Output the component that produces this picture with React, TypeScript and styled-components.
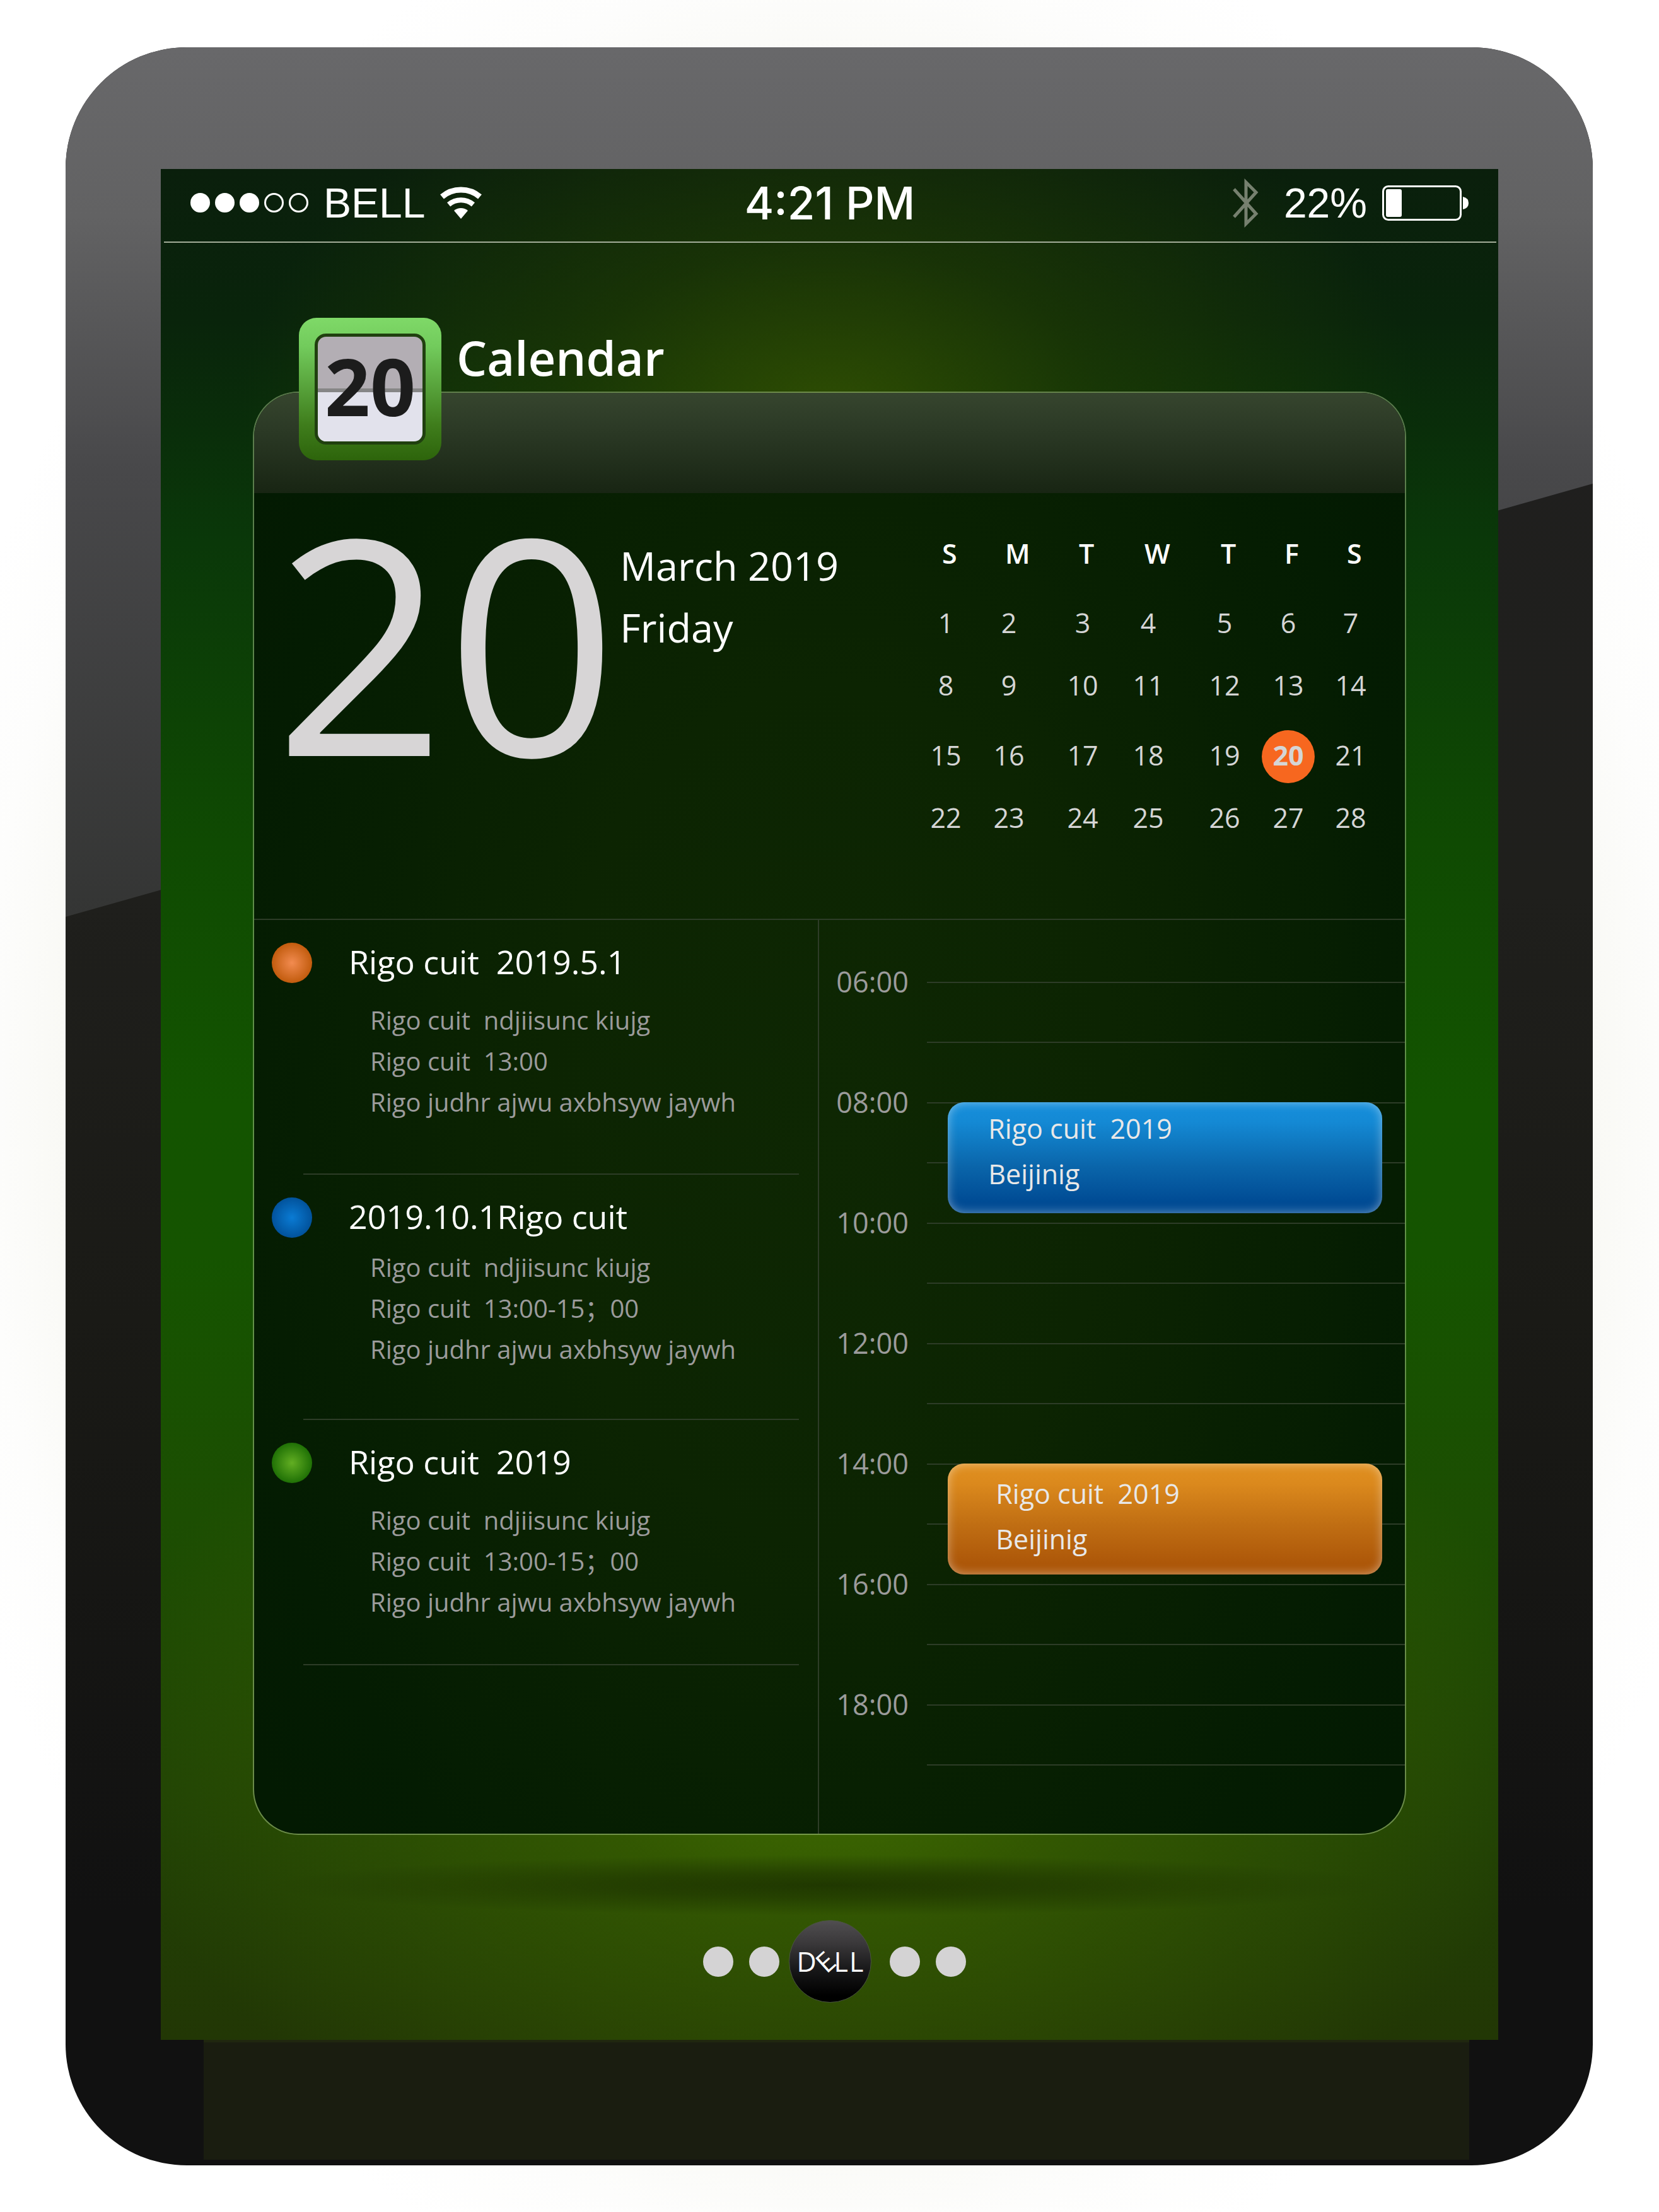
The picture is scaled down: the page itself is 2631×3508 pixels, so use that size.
import React from "react";
import styled, { createGlobalStyle } from "styled-components";

const GlobalStyle = createGlobalStyle`
  *, *::before, *::after { box-sizing: border-box; }
  body {
    margin: 0;
    font-family: "Open Sans", "Noto Sans", "Noto Sans CJK SC", sans-serif;
    color: #fff;
    background: #fff;
  }
  h1, h2, p, ol, ul { margin: 0; padding: 0; font-weight: 400; }
  ol, ul { list-style: none; }
`;

const Page = styled.div`
  padding: 75px 105px 74px 104px;
  background: radial-gradient(ellipse 56% 56% at 50% 50%, #f6f7ef 0%, #f8f8f3 80%, #fdfdfc 91%, #fff 100%);
`;

const Device = styled.div`
  position: relative;
  overflow: hidden;
  padding: 193px 150px 9px 151px;
  border-radius: 192px;
  background: linear-gradient(180deg, #201f20 0%, #1f1f1c 40%, #1a1a16 60%, #111 88%, #111 100%);

  &::before {
    content: "";
    position: absolute;
    inset: 0;
    background: linear-gradient(180deg, #68686a 0%, #626263 8%, #48484a 20%, #343534 41%);
    clip-path: polygon(0 0, 100% 0, 100% 692px, 0 1379px);
  }
`;

const Screen = styled.main`
  position: relative;
  padding-bottom: 59px;
  background:
    radial-gradient(ellipse 44% 20% at 50% 13%, rgba(58, 88, 0, 0.75) 0%, rgba(42, 70, 0, 0.45) 45%, rgba(30, 60, 0, 0) 100%),
    radial-gradient(ellipse 54% 25% at 50% 84%, #427000 0%, rgba(60, 100, 0, 0.65) 35%, rgba(50, 84, 0, 0) 100%),
    linear-gradient(180deg, #0a1f0c 0%, #09240b 8%, #0a3809 20%, #0f4a02 36%, #135400 50%, #155400 58%, #1c4e02 72%, #214404 86%, #223705 100%);
`;

const StatusBar = styled.header`
  display: grid;
  grid-template-columns: 1fr auto 1fr;
  align-items: center;
  height: 117px;
  margin: 0 3px 0 5px;
  padding: 0 43px 8px 42px;
  border-bottom: 2px solid #a3ad99;
  font-family: "Liberation Sans", sans-serif;
  font-size: 66px;
  line-height: 80px;
`;

const StatusGroup = styled.div<{ $end?: boolean }>`
  display: flex;
  align-items: center;
  justify-content: ${(p) => (p.$end ? "flex-end" : "flex-start")};
`;

const Signal = styled.span`
  display: flex;
  gap: 8px;
  margin-right: 24px;
`;

const SignalDot = styled.i<{ $on: boolean }>`
  width: 31px;
  height: 31px;
  border: 3px solid #fff;
  border-radius: 50%;
  background: ${(p) => (p.$on ? "#fff" : "transparent")};
`;

const Carrier = styled.span`
  margin-right: 24px;
`;

const Clock = styled.time`
  font-family: Inter, sans-serif;
  font-size: 71px;
  font-weight: 500;
`;

const BatteryLevel = styled.span`
  margin: 0 24px 0 40px;
`;

const TitleBar = styled.div`
  position: relative;
  z-index: 1;
  display: flex;
  gap: 24px;
  margin-bottom: -109px;
  padding: 119px 0 0 219px;
`;

const AppIcon = styled.div`
  width: 226px;
  height: 226px;
  padding: 25px;
  border-radius: 28px;
  background: linear-gradient(180deg, #7fd968 0%, #72cb5c 20%, #3f7d1c 75%, #2d640b 100%);
`;

const AppIconPage = styled.div`
  height: 176px;
  border: 5px solid #20400f;
  border-radius: 18px;
  background: linear-gradient(180deg, #b3aeb4 0 82px, #868686 82px 88px, #e2e2ec 88px);
  color: #1c1c1c;
  font-size: 126px;
  font-weight: 700;
  line-height: 154px;
  text-align: center;
`;

const Title = styled.h1`
  padding-top: 11px;
  font-size: 76px;
  font-weight: 600;
  line-height: 104px;
`;

const Panel = styled.section`
  overflow: hidden;
  margin: 0 146px;
  border: 2px solid rgba(190, 220, 160, 0.45);
  border-radius: 72px;
  background: radial-gradient(ellipse 62% 75% at 50% 50%, #0e2703 0%, #0c2402 40%, #041c02 85%, #031a02 100%) padding-box;
`;

const PanelBar = styled.div`
  height: 159px;
  background: linear-gradient(180deg, #36452e 0%, #2b3925 38%, #182513 100%);
`;

const Overview = styled.div`
  display: flex;
  align-items: flex-start;
  height: 677px;
  padding: 32px 44px 0 32px;
  border-bottom: 2px solid #2d3c27;
`;

const BigDay = styled.div`
  color: #d7d5d6;
  font-size: 476px;
  line-height: 400px;
`;

const DateText = styled.div`
  padding: 34px 0 0 4px;
  font-size: 63px;
  line-height: 98px;
`;

const Month = styled.table`
  margin: 2px 0 0 auto;
  border-collapse: collapse;
  table-layout: fixed;
  width: 726px;
  font-size: 43px;
  line-height: 80px;
  color: #d5d5d5;

  th {
    height: 124px;
    padding: 0 0 0 36px;
    color: #fff;
    font-weight: 600;
    text-align: left;
  }
  td { height: 99px; padding: 0; }
  tbody + tbody tr:first-child td { height: 111px; padding-top: 12px; }
`;

const DayCell = styled.span<{ $today: boolean }>`
  display: block;
  width: 84px;
  height: 84px;
  border-radius: 50%;
  background: ${(p) => (p.$today ? "#f7671f" : "transparent")};
  font-weight: ${(p) => (p.$today ? 700 : 400)};
  text-align: center;
`;

const Columns = styled.div`
  display: grid;
  grid-template-columns: 49fr 51fr;
`;

const Agenda = styled.ul`
  padding-left: 28px;
`;

const AgendaItem = styled.li<{ $roomy?: boolean }>`
  display: grid;
  grid-template-columns: 64px 1fr;
  column-gap: 58px;
  align-items: start;
  position: relative;
  height: ${(p) => (p.$roomy ? 404 : 389)}px;
  padding-top: 32px;

  &::after {
    content: "";
    position: absolute;
    left: 50px;
    right: 30px;
    bottom: 0;
    height: 2px;
    background: #2d3c27;
  }
`;

const Bullet = styled.i<{ $from: string; $to: string }>`
  width: 64px;
  height: 64px;
  margin-top: 4px;
  border-radius: 50%;
  background: radial-gradient(circle, ${(p) => p.$from} 0%, ${(p) => p.$to} 85%);
`;

const AgendaTitle = styled.h2`
  font-size: 52px;
  line-height: 68px;
  white-space: pre;
`;

const Details = styled.div<{ $tight?: boolean }>`
  margin-top: ${(p) => (p.$tight ? 14 : 26)}px;
  padding-left: 34px;
  color: #9b9b9b;
  font-size: 40px;
  line-height: 65px;
  white-space: pre;
`;

const Schedule = styled.ol`
  padding: 98px 0 14px;
  border-left: 2px solid #2d3c27;
`;

const HourRow = styled.li`
  display: grid;
  grid-template-columns: 171px 1fr;
  height: 191px;
`;

const HourLabel = styled.time`
  margin-top: -30px;
  padding-left: 27px;
  color: #9b9b9b;
  font-size: 45px;
  line-height: 60px;
`;

const Slots = styled.div`
  position: relative;
  display: grid;
  grid-template-rows: 95px 96px;
`;

const Slot = styled.div`
  border-top: 2px solid #2d3c27;
`;

const EventCard = styled.article<{ $kind: "blue" | "orange" }>`
  position: absolute;
  top: 0;
  left: 33px;
  right: 36px;
  height: 176px;
  padding: ${(p) => (p.$kind === "blue" ? "6px 0 0 64px" : "12px 0 0 76px")};
  border-radius: 26px;
  background: ${(p) =>
    p.$kind === "blue"
      ? "linear-gradient(180deg, #168fdc 0%, #1489d4 18%, #0a65aa 58%, #004b94 90%)"
      : "linear-gradient(180deg, #e09020 0%, #db891d 18%, #c06e13 55%, #ad5709 90%)"};
  box-shadow: inset 0 0 16px rgba(255, 255, 255, 0.45);
  color: #e8e8e8;
  font-size: 43px;
  line-height: 72px;
  white-space: pre;
`;

const PanelShadow = styled.div`
  height: 135px;
  background: radial-gradient(ellipse 42% 48px at 50% 80px, rgba(28, 50, 0, 0.85) 0%, rgba(28, 50, 0, 0.6) 40%, rgba(28, 50, 0, 0) 100%);
`;

const Pager = styled.nav`
  display: flex;
  align-items: center;
  justify-content: center;
  gap: 25px;
  padding-left: 16px;
`;

const PageDot = styled.button`
  width: 48px;
  height: 48px;
  padding: 0;
  border: 0;
  border-radius: 50%;
  background: #d4d3d4;
`;

const HomeButton = styled.button`
  display: flex;
  align-items: center;
  justify-content: center;
  gap: 2px;
  width: 131px;
  height: 131px;
  margin: 0 4px 0 -10px;
  padding: 0;
  border: 1px solid #4a5540;
  border-radius: 50%;
  background: linear-gradient(180deg, #504e50 0%, #3a383a 28%, #161617 62%, #000 92%);
  color: #fff;
  font: 400 43px/60px "Open Sans", "Noto Sans", sans-serif;
`;

const TiltedLetter = styled.span`
  transform: rotate(-42deg);
`;

const Stand = styled.div`
  position: relative;
  height: 190px;
  margin: 0 46px 0 68px;
  border-top: 4px solid #20270f;
  background: #1a1d10;
`;

const weeks = [
  [
    [1, 2, 3, 4, 5, 6, 7],
    [8, 9, 10, 11, 12, 13, 14],
  ],
  [
    [15, 16, 17, 18, 19, 20, 21],
    [22, 23, 24, 25, 26, 27, 28],
  ],
];

const columnWidths = [100, 117, 104, 121, 101, 99, 84];

const agenda = [
  {
    title: "Rigo cuit  2019.5.1",
    lines: ["Rigo cuit  ndjiisunc kiujg", "Rigo cuit  13:00", "Rigo judhr ajwu axbhsyw jaywh"],
    from: "#f28b50",
    to: "#b85200",
  },
  {
    title: "2019.10.1Rigo cuit",
    lines: ["Rigo cuit  ndjiisunc kiujg", "Rigo cuit  13:00-15；00", "Rigo judhr ajwu axbhsyw jaywh"],
    from: "#0a7bd4",
    to: "#004a90",
  },
  {
    title: "Rigo cuit  2019",
    lines: ["Rigo cuit  ndjiisunc kiujg", "Rigo cuit  13:00-15；00", "Rigo judhr ajwu axbhsyw jaywh"],
    from: "#62ae22",
    to: "#126400",
  },
];

const hours: { time: string; event?: "blue" | "orange" }[] = [
  { time: "06:00" },
  { time: "08:00", event: "blue" },
  { time: "10:00" },
  { time: "12:00" },
  { time: "14:00", event: "orange" },
  { time: "16:00" },
  { time: "18:00" },
];

const WifiIcon = () => (
  <svg width="66" height="52" viewBox="0 0 66 52" fill="none" stroke="#fff" aria-label="Wi-Fi">
    <path d="M3 16 A46.5 46.5 0 0 1 63 16" strokeWidth="9" />
    <path d="M13.6 28.4 A30 30 0 0 1 52.4 28.4" strokeWidth="8" />
    <path d="M33 51 L22 38 A17 17 0 0 1 44 38 Z" fill="#fff" stroke="none" />
  </svg>
);

const BluetoothIcon = () => (
  <svg width="41" height="78" viewBox="0 0 41 78" fill="none" stroke="#76806f" strokeWidth="5" aria-label="Bluetooth">
    <path d="M2 17 L37 56 L21 72 V6 L37 22 L2 61" />
  </svg>
);

const BatteryIcon = () => (
  <svg width="138" height="56" viewBox="0 0 138 56" fill="none" aria-label="Battery">
    <rect x="1.5" y="1.5" width="123" height="53" rx="8" stroke="#fff" strokeWidth="3" />
    <rect x="6" y="6" width="25" height="44" rx="3" fill="#fff" />
    <path d="M128 18 Q137 20 137 28 Q137 36 128 38 Z" fill="#fff" />
  </svg>
);

export default function App() {
  return (
    <>
      <GlobalStyle />
      <Page>
        <Device>
          <Screen>
            <StatusBar>
              <StatusGroup>
                <Signal aria-label="Signal strength">
                  {[1, 2, 3, 4, 5].map((n) => (
                    <SignalDot key={n} $on={n <= 3} />
                  ))}
                </Signal>
                <Carrier>BELL</Carrier>
                <WifiIcon />
              </StatusGroup>
              <Clock>4:21 PM</Clock>
              <StatusGroup $end>
                <BluetoothIcon />
                <BatteryLevel>22%</BatteryLevel>
                <BatteryIcon />
              </StatusGroup>
            </StatusBar>

            <TitleBar>
              <AppIcon>
                <AppIconPage>20</AppIconPage>
              </AppIcon>
              <Title>Calendar</Title>
            </TitleBar>

            <Panel>
              <PanelBar />
              <Overview>
                <BigDay>20</BigDay>
                <DateText>
                  <p>March 2019</p>
                  <p>Friday</p>
                </DateText>
                <Month>
                  <colgroup>
                    {columnWidths.map((w, i) => (
                      <col key={i} width={w} />
                    ))}
                  </colgroup>
                  <thead>
                    <tr>
                      {["S", "M", "T", "W", "T", "F", "S"].map((d, i) => (
                        <th key={i} scope="col">{d}</th>
                      ))}
                    </tr>
                  </thead>
                  {weeks.map((group, g) => (
                    <tbody key={g}>
                      {group.map((week) => (
                        <tr key={week[0]}>
                          {week.map((day) => (
                            <td key={day}>
                              <DayCell $today={day === 20}>{day}</DayCell>
                            </td>
                          ))}
                        </tr>
                      ))}
                    </tbody>
                  ))}
                </Month>
              </Overview>

              <Columns>
                <Agenda>
                  {agenda.map((item, i) => (
                    <AgendaItem key={item.title} $roomy={i === 0}>
                      <Bullet $from={item.from} $to={item.to} />
                      <div>
                        <AgendaTitle>{item.title}</AgendaTitle>
                        <Details $tight={i === 1}>
                          {item.lines.map((line) => (
                            <p key={line}>{line}</p>
                          ))}
                        </Details>
                      </div>
                    </AgendaItem>
                  ))}
                </Agenda>
                <Schedule>
                  {hours.map((hour) => (
                    <HourRow key={hour.time}>
                      <HourLabel>{hour.time}</HourLabel>
                      <Slots>
                        <Slot />
                        <Slot />
                        {hour.event && (
                          <EventCard $kind={hour.event}>
                            <p>{"Rigo cuit  2019"}</p>
                            <p>Beijinig</p>
                          </EventCard>
                        )}
                      </Slots>
                    </HourRow>
                  ))}
                </Schedule>
              </Columns>
            </Panel>

            <PanelShadow />
            <Pager aria-label="Pages">
              <PageDot aria-label="Page 1" />
              <PageDot aria-label="Page 2" />
              <HomeButton>
                <span>D</span>
                <TiltedLetter>E</TiltedLetter>
                <span>L</span>
                <span>L</span>
              </HomeButton>
              <PageDot aria-label="Page 3" />
              <PageDot aria-label="Page 4" />
            </Pager>
          </Screen>
          <Stand />
        </Device>
      </Page>
    </>
  );
}
